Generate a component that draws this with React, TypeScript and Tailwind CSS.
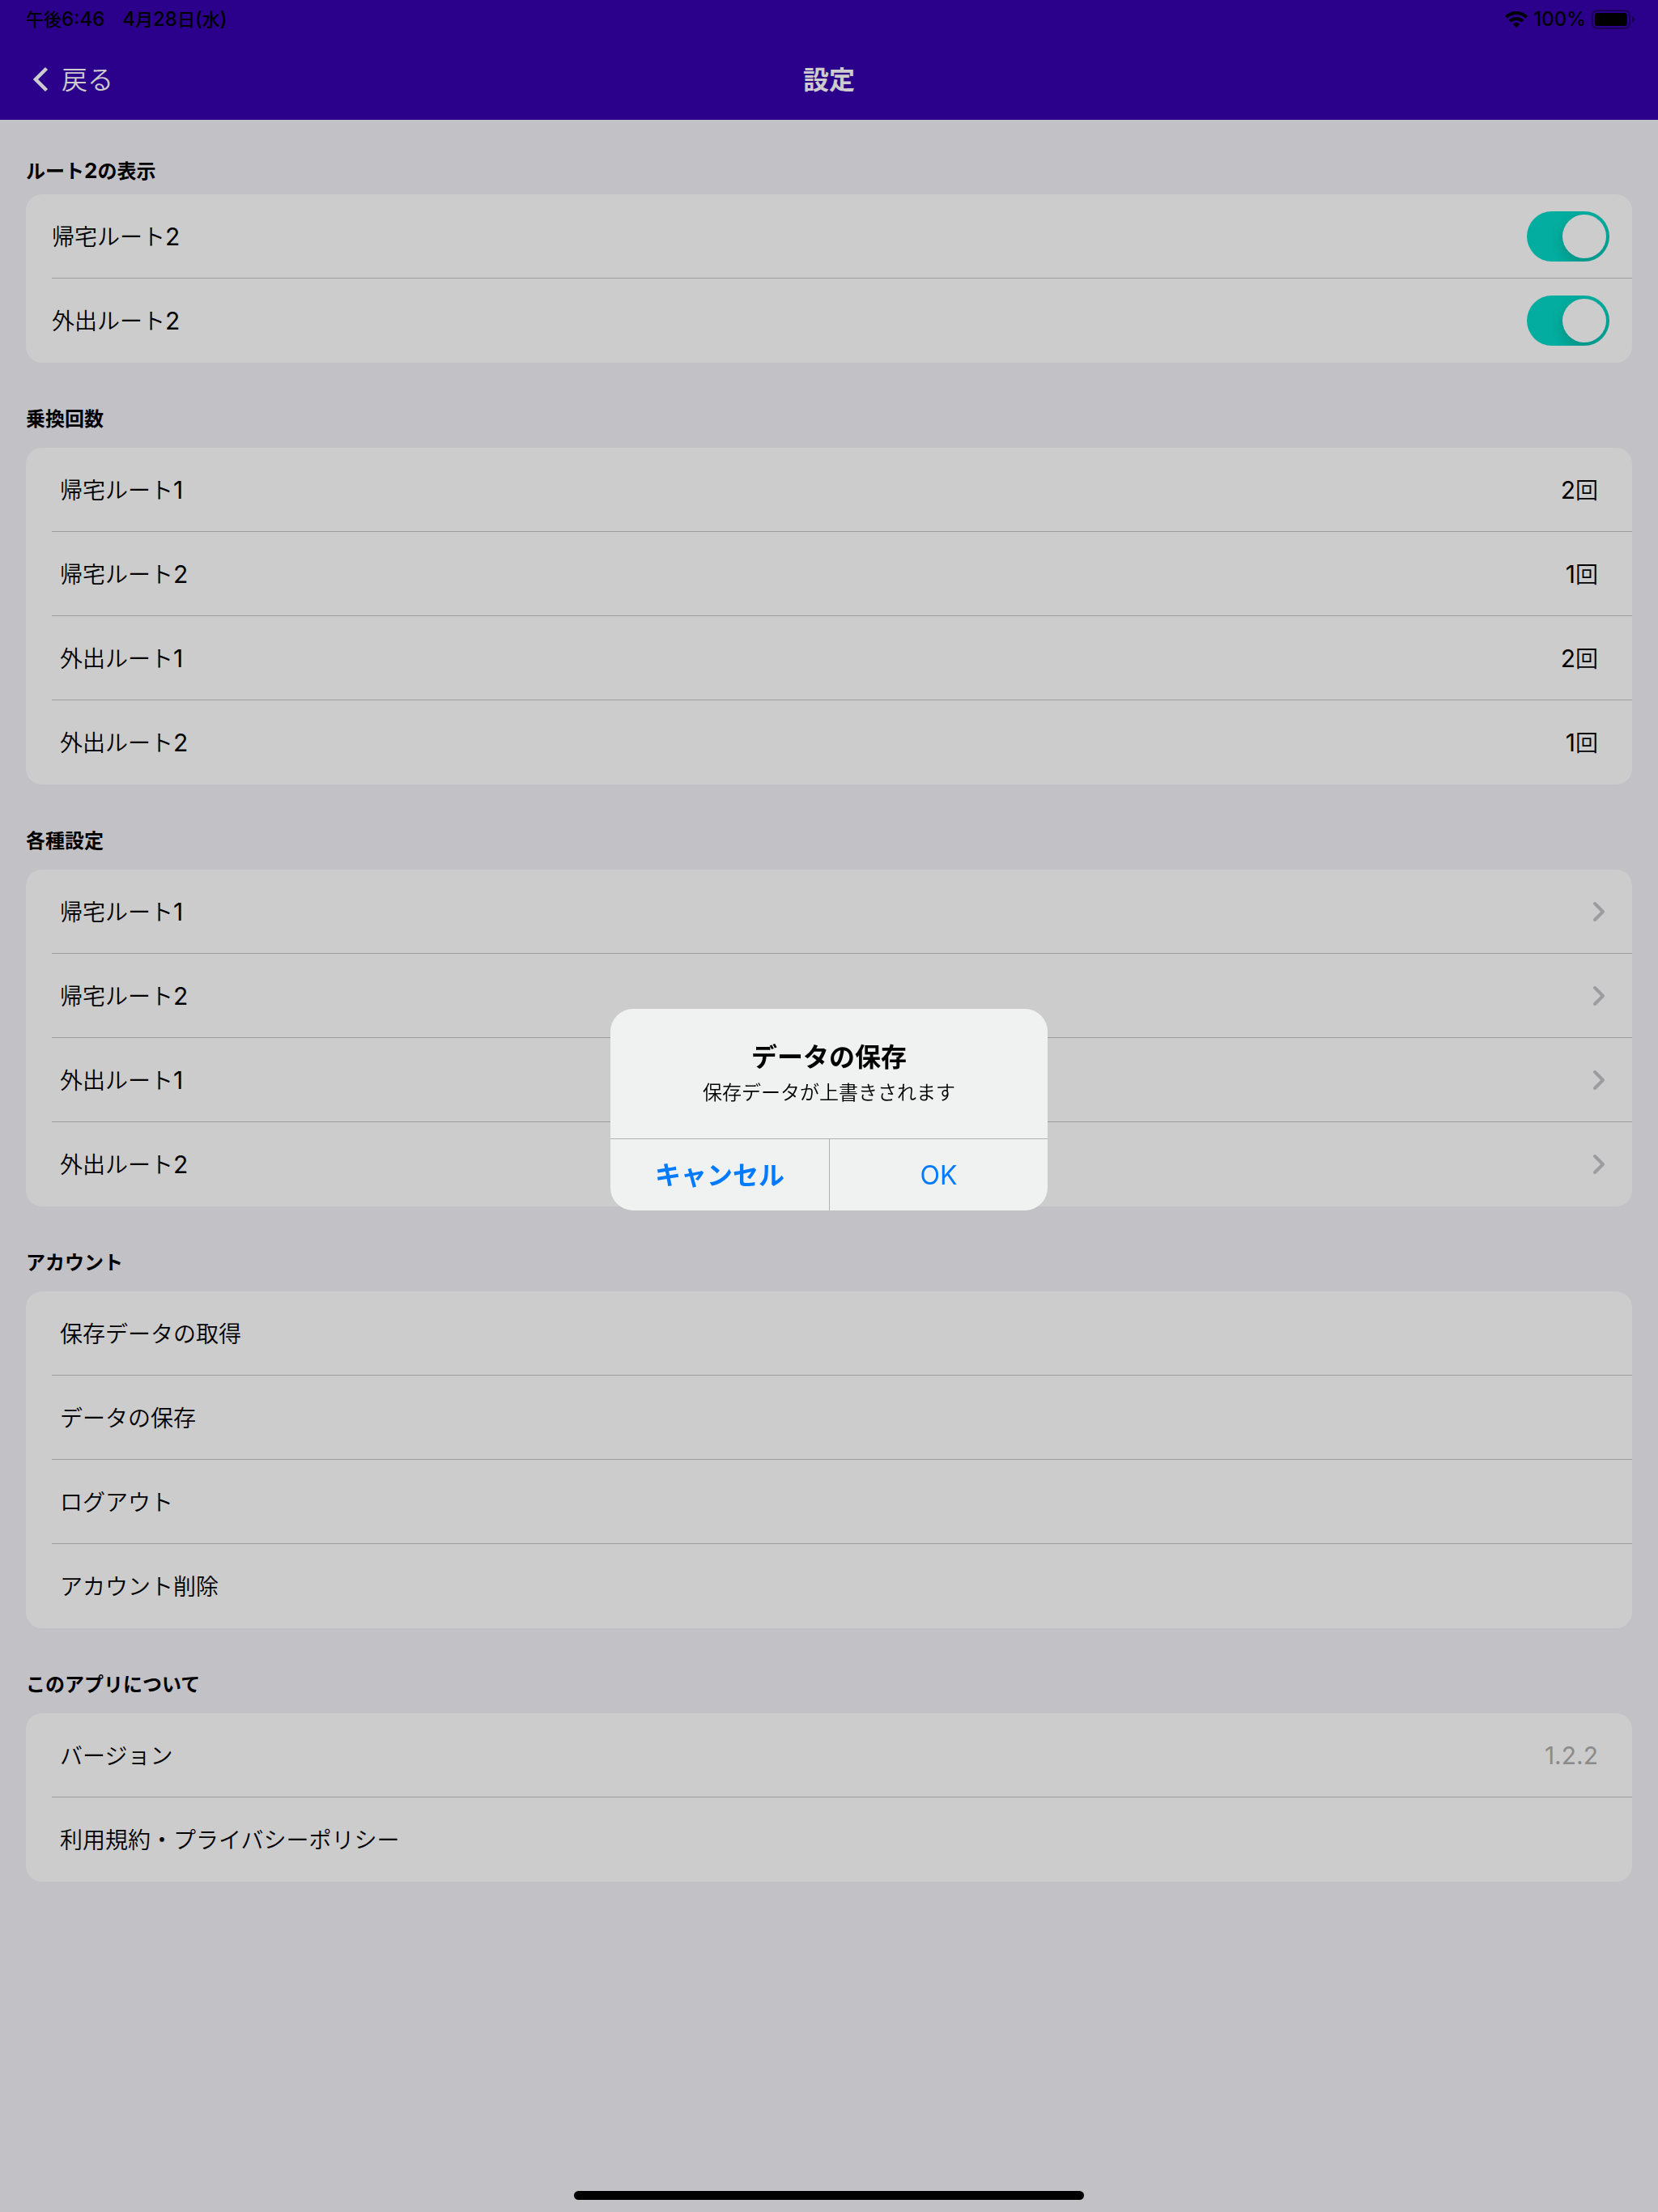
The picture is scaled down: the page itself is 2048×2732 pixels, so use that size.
import { useState } from "react";
import type { ReactNode } from "react";

/** Sets figures and Latin letters slightly larger than the Japanese around them. */
function Mixed({ text, latin }: { text: string; latin: string }) {
  return (
    <>
      {text.split(/([0-9:.%()]+)/).map((part, i) =>
        i % 2 === 1 ? (
          <span key={i} className={latin}>
            {part}
          </span>
        ) : (
          part
        ),
      )}
    </>
  );
}

function StatusBar() {
  return (
    <div className="flex h-12 items-center justify-between pr-7 pl-8 text-[22px] leading-6 font-medium text-black">
      <div className="flex gap-[22px]">
        <span>
          <Mixed text="午後6:46" latin="text-2xl leading-6" />
        </span>
        <span>
          <Mixed text="4月28日(水)" latin="text-2xl leading-6" />
        </span>
      </div>
      <div className="flex items-center gap-[7px]">
        <svg width="28" height="20" viewBox="0 0 28 20" fill="none" stroke="#000" strokeWidth="4" aria-label="Wi-Fi">
          <path d="M1.4 7.2a18 18 0 0 1 25.2 0" />
          <path d="M6 12.200a11.4 11.4 0 0 1 16 0" />
          <path d="M14 20l-4.2-4.3a6 6 0 0 1 8.4 0z" fill="#000" stroke="none" />
        </svg>
        <span className="text-2xl leading-6 font-medium">100%</span>
        <svg width="54" height="24" viewBox="0 0 54 24" aria-label="バッテリー">
          <rect x="1" y="1" width="46" height="22" rx="6" fill="none" stroke="#000" strokeOpacity="0.4" strokeWidth="2" />
          <rect x="4" y="4" width="40" height="16" rx="3.5" fill="#000" />
          <path d="M50 8c2 .8 3 2.200 3 4s-1 3.200-3 4z" fill="#000" fillOpacity="0.45" />
        </svg>
      </div>
    </div>
  );
}

function Header() {
  return (
    <header className="bg-[#3600ae] text-white">
      <StatusBar />
      <div className="grid h-25 grid-cols-3 items-center px-10 text-[32px] leading-10">
        <button type="button" className="flex items-center gap-4 justify-self-start font-[350]">
          <svg width="20" height="32" viewBox="0 0 20 32" fill="none" stroke="currentColor" strokeWidth="4.5">
            <path d="M17.500 2.500 4 16l13.500 13.500" />
          </svg>
          <span className="pt-0.5">戻る</span>
        </button>
        <h1 className="justify-self-center pt-0.5 font-bold">設定</h1>
      </div>
    </header>
  );
}

function Section({ title, first, children }: { title: string; first?: boolean; children: ReactNode }) {
  return (
    <section>
      <h2 className={`text-2xl leading-9 font-bold ${first ? "pt-[46px] pb-[10px]" : "pt-[52px] pb-[17px]"}`}>
        <Mixed text={title} latin="text-[26px] leading-none" />
      </h2>
      <div className="overflow-hidden rounded-[20px] bg-white pl-8 [&>*:last-child]:border-b-0">{children}</div>
    </section>
  );
}

const ROW = "flex h-26 w-full items-center justify-between border-b border-[#c6c6c8] text-left";

function Label({ text }: { text: string }) {
  return (
    <span className="pt-0.5">
      <Mixed text={text} latin="text-[30px] leading-none font-normal" />
    </span>
  );
}

function SwitchRow({ label }: { label: string }) {
  const [on, setOn] = useState(true);
  return (
    <label className={`${ROW} pr-7`}>
      <Label text={label} />
      <input
        type="checkbox"
        role="switch"
        checked={on}
        onChange={(e) => setOn(e.target.checked)}
        className="flex h-[62px] w-[102px] appearance-none items-center overflow-hidden rounded-full bg-gray-200 p-1 before:size-[54px] before:rounded-full before:bg-white before:shadow-[0_6px_16px_rgba(0,0,0,0.18)] checked:justify-end checked:bg-[#04d9c7]"
      />
    </label>
  );
}

function ValueRow({ label, value }: { label: string; value: string }) {
  return (
    <button type="button" className={`${ROW} pr-[42px] pl-[10px]`}>
      <Label text={label} />
      <Label text={value} />
    </button>
  );
}

function LinkRow({ label }: { label: string }) {
  return (
    <button type="button" className={`${ROW} pr-8 pl-[10px]`}>
      <Label text={label} />
      <svg
        width="18"
        height="28"
        viewBox="0 0 18 28"
        fill="none"
        stroke="#c4c4c7"
        strokeWidth="4"
        strokeLinecap="round"
        strokeLinejoin="round"
      >
        <path d="M4 4l10 10L4 24" />
      </svg>
    </button>
  );
}

function ActionRow({ label }: { label: string }) {
  return (
    <button type="button" className={`${ROW} pl-[10px]`}>
      <Label text={label} />
    </button>
  );
}

function SaveDialog() {
  return (
    <div className="fixed inset-0 flex items-center justify-center bg-black/20 pt-[9px]">
      <div
        role="alertdialog"
        aria-labelledby="save-title"
        aria-describedby="save-message"
        className="w-[540px] overflow-hidden rounded-[28px] bg-[#f0f1f1] text-center"
      >
        <div className="px-8 pt-10 pb-[38px]">
          <h2 id="save-title" className="text-[32px] leading-10 font-bold">
            データの保存
          </h2>
          <p id="save-message" className="pt-1.5 text-2xl leading-9 font-[350]">
            保存データが上書きされます
          </p>
        </div>
        <div className="grid grid-cols-2 border-t border-[#b0b1b2] text-[32px] leading-10 text-[#007aff]">
          <button type="button" className="h-22 pt-0.5 font-bold">
            キャンセル
          </button>
          <button type="button" className="h-22 border-l border-[#b0b1b2] pt-0.5 font-normal">
            OK
          </button>
        </div>
      </div>
    </div>
  );
}

export default function App() {
  return (
    <div className="flex min-h-screen flex-col bg-[#f3f2f8] font-['Inter','Noto_Sans_CJK_JP',sans-serif] text-black" lang="ja">
      <Header />
      <main className="px-8 text-[28px] leading-10 font-[350]">
        <Section title="ルート2の表示" first>
          <SwitchRow label="帰宅ルート2" />
          <SwitchRow label="外出ルート2" />
        </Section>
        <Section title="乗換回数">
          <ValueRow label="帰宅ルート1" value="2回" />
          <ValueRow label="帰宅ルート2" value="1回" />
          <ValueRow label="外出ルート1" value="2回" />
          <ValueRow label="外出ルート2" value="1回" />
        </Section>
        <Section title="各種設定">
          <LinkRow label="帰宅ルート1" />
          <LinkRow label="帰宅ルート2" />
          <LinkRow label="外出ルート1" />
          <LinkRow label="外出ルート2" />
        </Section>
        <Section title="アカウント">
          <ActionRow label="保存データの取得" />
          <ActionRow label="データの保存" />
          <ActionRow label="ログアウト" />
          <ActionRow label="アカウント削除" />
        </Section>
        <Section title="このアプリについて">
          <div className={`${ROW} pr-[42px] pl-[10px]`}>
            <Label text="バージョン" />
            <span className="flex text-[#aeaeae]">
              <Label text="1.2.2" />
            </span>
          </div>
          <a href="#policy" className={`${ROW} pl-[10px]`}>
            <Label text="利用規約・プライバシーポリシー" />
          </a>
        </Section>
      </main>
      <SaveDialog />
      <div className="fixed inset-x-0 bottom-[15px] flex justify-center">
        <div className="h-[11px] w-[630px] rounded-full bg-black" />
      </div>
    </div>
  );
}
